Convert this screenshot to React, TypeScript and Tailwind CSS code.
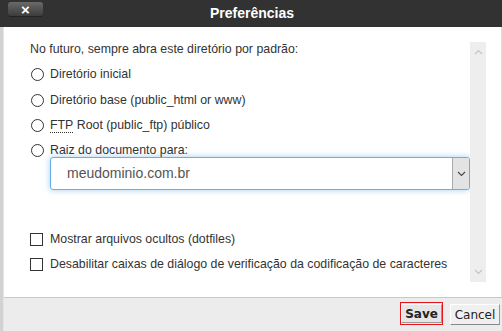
import React from 'react';

const font = { fontFamily: '"Liberation Sans", Arial, sans-serif' };

const Radio: React.FC<{ children: React.ReactNode; className?: string }> = ({ children, className }) => (
    <label className={`flex items-center h-4 ${className ?? ''}`}>
        <span className="ml-px w-[13px] h-[13px] rounded-full border border-[#333] bg-white shrink-0" />
        <span className="ml-[6px] leading-4">{children}</span>
    </label>
);

const Checkbox: React.FC<{ children: React.ReactNode; className?: string }> = ({ children, className }) => (
    <label className={`flex items-center h-4 ${className ?? ''}`}>
        <span className="w-[13px] h-[13px] border border-[#333] bg-white shrink-0" />
        <span className="ml-[7px] leading-4">{children}</span>
    </label>
);

const App: React.FC = () => {
    return (
        <div className="w-[502px] h-[331px] flex flex-col overflow-hidden bg-[#d4d4d4] text-[12.35px] text-[#333]" style={font}>
            {/* header */}
            <div className="h-[27px] shrink-0 bg-[#323232] relative flex items-center justify-center">
                <button className="absolute left-[8px] top-[2px] w-[35px] h-[15px] rounded-[3px] bg-gradient-to-b from-[#6a6a6a] to-[#3c3c3c] border-b border-[#222] flex items-center justify-center text-white font-bold text-[15px] leading-none">
                    ×
                </button>
                <h1 className="text-white font-bold text-[14px] ml-[2px]">Preferências</h1>
            </div>

            <div className="flex-1 flex">
                <div className="w-[4px] shrink-0 bg-[#d2d2d2] border-r border-[#e4e4e4]" />
                <div className="flex-1 flex flex-col">
                    {/* body */}
                    <div className="flex-1 bg-white flex border-r border-[#ddd]">
                        <div className="flex-1 pl-[26px] pt-[14px]">
                            <p className="leading-4">No futuro, sempre abra este diretório por padrão:</p>
                            <Radio className="mt-[9px]">Diretório inicial</Radio>
                            <Radio className="mt-[10px]">Diretório base (public_html or www)</Radio>
                            <Radio className="mt-[9px]">
                                <abbr className="no-underline border-b border-dotted border-[#333] leading-[13px] inline-block">FTP</abbr> Root (public_ftp) público
                            </Radio>
                            <Radio className="mt-[9px]">Raiz do documento para:</Radio>
                            <div className="ml-[20px] -mt-px h-[33px] border border-[#66afe9] rounded-[3px] shadow-[0_0_6px_rgba(102,175,233,0.6)] flex items-center bg-white">
                                <span className="flex-1 pl-4 text-[14px] text-[#555]">meudominio.com.br</span>
                                <span className="w-[17px] h-[31px] bg-[#e3e3e3] border-l border-[#aaa] rounded-r-[2px] flex items-center justify-center">
                                    <svg width="9" height="6" viewBox="0 0 9 6">
                                        <path d="M1 1l3.5 3.5L8 1" fill="none" stroke="#444" strokeWidth="1.1" />
                                    </svg>
                                </span>
                            </div>
                            <Checkbox className="mt-[41px]">Mostrar arquivos ocultos (dotfiles)</Checkbox>
                            <Checkbox className="mt-[9px]">Desabilitar caixas de diálogo de verificação da codificação de caracteres</Checkbox>
                        </div>
                        {/* scrollbar */}
                        <div className="w-[16px] my-[15px] bg-[#eeeeee] flex flex-col items-center justify-between py-[7px]">
                            <svg width="9" height="6" viewBox="0 0 9 6">
                                <path d="M1 5l3.5-3.5L8 5" fill="none" stroke="#c4c4c4" strokeWidth="1.2" />
                            </svg>
                            <svg width="9" height="6" viewBox="0 0 9 6">
                                <path d="M1 1l3.5 3.5L8 1" fill="none" stroke="#c4c4c4" strokeWidth="1.2" />
                            </svg>
                        </div>
                        <div className="w-[15px]" />
                    </div>

                    {/* footer */}
                    <div className="h-[34px] shrink-0 bg-[#ececec] border-t border-[#c8c8c8] flex items-start justify-end pr-[2px] pt-[4px] gap-[7px]" style={{ fontFamily: '"DejaVu Sans", Verdana, sans-serif' }}>
                        <div className="border border-[#e8141c] w-[43px] h-[23px] flex items-center justify-center">
                            <button className="h-[19px] px-[3px] bg-[#e6e6e6] border border-t-white border-l-white border-r-[#999] border-b-[#999] text-[12px] font-bold text-[#222] leading-none">
                                Save
                            </button>
                        </div>
                        <button className="mt-[2px] h-[21px] w-[50px] bg-[#f0f0f0] border border-t-white border-l-white border-r-[#999] border-b-[#888] text-[12px] text-[#222] leading-none">
                            Cancel
                        </button>
                    </div>
                </div>
            </div>
        </div>
    );
};

export default App;
